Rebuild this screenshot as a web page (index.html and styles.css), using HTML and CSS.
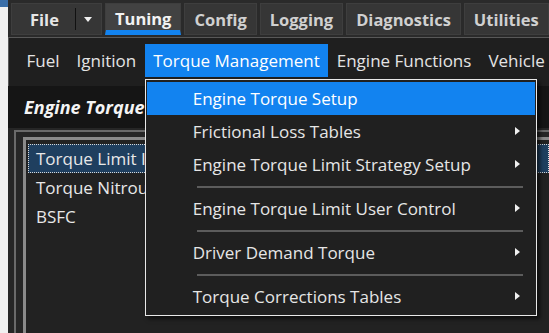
FILE: index.html
```html
<!DOCTYPE html>
<html lang="en">
<head>
  <meta charset="UTF-8" />
  <meta name="viewport" content="width=device-width, initial-scale=1.0">
  <title>Tuning - Torque Management</title>
  <link rel="stylesheet" href="styles.css">
</head>
<body>

  <div class="app">
    <div class="menubar">
      <div class="tab file-tab">
        <span>File</span>
        <span class="split"></span>
        <span class="caret"></span>
      </div>
      <div class="tab active">Tuning</div>
      <div class="tab">Config</div>
      <div class="tab">Logging</div>
      <div class="tab">Diagnostics</div>
      <div class="tab">Utilities</div>
    </div>

    <div class="subbar">
      <div class="subitem">Fuel</div>
      <div class="subitem">Ignition</div>
      <div class="subitem open">
        Torque Management
        <div class="dropdown">
          <div class="drop-item hover">Engine Torque Setup</div>
          <div class="drop-item sub">Frictional Loss Tables</div>
          <div class="drop-item sub">Engine Torque Limit Strategy Setup</div>
          <div class="sep"></div>
          <div class="drop-item sub">Engine Torque Limit User Control</div>
          <div class="sep"></div>
          <div class="drop-item sub">Driver Demand Torque</div>
          <div class="sep"></div>
          <div class="drop-item sub">Torque Corrections Tables</div>
        </div>
      </div>
      <div class="subitem">Engine Functions</div>
      <div class="subitem">Vehicle Functions</div>
    </div>

    <div class="title">Engine Torque Management</div>

    <div class="panel">
      <div class="frame">
        <div class="list">
          <div class="list-item selected">Torque Limit Inputs</div>
          <div class="list-item">Torque Nitrous Tables</div>
          <div class="list-item">BSFC</div>
        </div>
      </div>
    </div>
  </div>

</body>
</html>
```

FILE: styles.css
```css
* {
  box-sizing: border-box;
  font-family: 'Open Sans', 'Noto Sans', sans-serif;
}

body {
  margin: 0;
  height: 333px;
  overflow: hidden;
  background: linear-gradient(#3a6ea8, #3a6ea8) no-repeat 0 0 / 8px 7px, #f0f0f0;
}

.app {
  margin-left: 8px;
  height: 333px;
  overflow: hidden;
  background-color: #262626;
  display: flex;
  flex-direction: column;
}

/* top menu */
.menubar {
  height: 37px;
  flex-shrink: 0;
  padding: 3px 0 0 3px;
  display: flex;
  gap: 3px;
  background-color: #2a2a2a;
}

.tab {
  height: 32px;
  padding: 0 9px;
  display: flex;
  align-items: center;
  background-color: #363636;
  border: 1px solid #3e3e3e;
  color: #d0d0d0;
  font-weight: bold;
  font-size: 16.5px;
  white-space: nowrap;
}

.tab.active {
  background-color: #424242;
  color: #f2f2f2;
  border-bottom: 5px solid #1283f0;
  padding-top: 2px;
}

.file-tab {
  width: 91px;
  padding-left: 18px;
  color: #e6e6e6;
}

.split {
  width: 1px;
  height: 22px;
  background-color: #111;
  margin-left: 16px;
}

.caret {
  width: 0;
  height: 0;
  margin-left: 8px;
  border-left: 4px solid transparent;
  border-right: 4px solid transparent;
  border-top: 5px solid #f0f0f0;
}

/* second row */
.subbar {
  height: 49px;
  flex-shrink: 0;
  padding: 6px 0 0 9px;
  display: flex;
  background-color: #1f1f1f;
  border-top: 1px solid #585858;
  border-left: 1px solid #585858;
}

.subitem {
  height: 33px;
  padding: 0 8.5px;
  display: flex;
  align-items: center;
  color: #e4e4e4;
  font-size: 17px;
  white-space: nowrap;
}

.subitem.open {
  position: relative;
  background-color: #1283f0;
  color: #fff;
}

.dropdown {
  position: absolute;
  top: 35px;
  left: 0;
  width: 392px;
  padding: 2px 1px;
  background-color: #202020;
  border: 1px solid #e8e8e8;
  box-shadow: 3px 3px 4px rgba(0, 0, 0, 0.6);
  z-index: 5;
}

.drop-item {
  height: 33px;
  padding-left: 46px;
  display: flex;
  align-items: center;
  position: relative;
  color: #e6e6e6;
  font-size: 17px;
}

.drop-item.hover {
  background-color: #1283f0;
  color: #fff;
}

.drop-item.sub::after {
  content: "";
  position: absolute;
  right: 15px;
  top: 12px;
  border-top: 4px solid transparent;
  border-bottom: 4px solid transparent;
  border-left: 5px solid #f0f0f0;
}

.sep {
  height: 11px;
  margin: 0 12px 0 50px;
  display: flex;
  align-items: center;
}

.sep::before {
  content: "";
  flex: 1;
  height: 2px;
  background-color: #5c5c5c;
}

/* title band */
.title {
  height: 42px;
  flex-shrink: 0;
  padding-left: 16px;
  display: flex;
  align-items: center;
  background-color: #151515;
  color: #f4f4f4;
  font-size: 18px;
  font-weight: bold;
  font-style: italic;
}

/* content */
.panel {
  flex: 1;
  padding: 2px 0 0 6px;
  background-color: #262626;
}

.frame {
  height: 100%;
  padding: 5px 0 0 7px;
  border-top: 2px solid #6a6a6a;
  border-left: 2px solid #6a6a6a;
}

.list {
  height: 100%;
  padding: 4px 0 0 2px;
  background-color: #222;
  border-top: 3px solid #8a8a8a;
  border-left: 3px solid #8a8a8a;
}

.list-item {
  height: 29px;
  padding-left: 8px;
  display: flex;
  align-items: center;
  color: #e8e8e8;
  font-size: 17px;
  white-space: nowrap;
}

.list-item.selected {
  background-color: #1f3f5f;
  outline: 1px dotted #d8d8d8;
  outline-offset: -1px;
}
```
